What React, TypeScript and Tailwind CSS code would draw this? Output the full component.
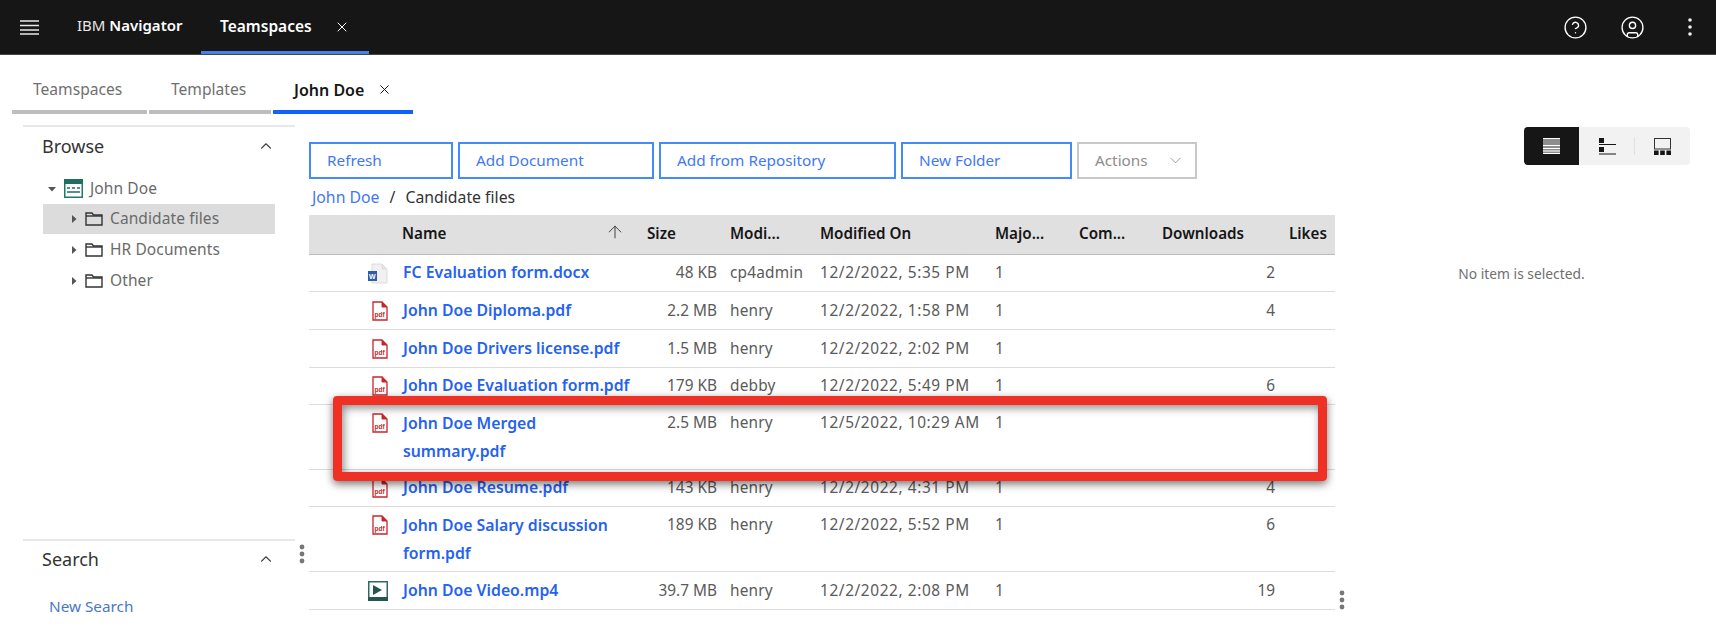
import { ArrowUp, ChevronDown, ChevronUp, CircleHelp, CircleUser, X } from "lucide-react";

const files = [
  { icon: "word", name: "FC Evaluation form.docx", size: "48 KB", by: "cp4admin", date: "12/2/2022, 5:35 PM", likes: "2", h: "h-[37px]" },
  { icon: "pdf", name: "John Doe Diploma.pdf", size: "2.2 MB", by: "henry", date: "12/2/2022, 1:58 PM", likes: "4", h: "h-[38px]" },
  { icon: "pdf", name: "John Doe Drivers license.pdf", size: "1.5 MB", by: "henry", date: "12/2/2022, 2:02 PM", likes: "", h: "h-[38px]" },
  { icon: "pdf", name: "John Doe Evaluation form.pdf", size: "179 KB", by: "debby", date: "12/2/2022, 5:49 PM", likes: "6", h: "h-[37px]" },
  { icon: "pdf", name: "John Doe Merged\nsummary.pdf", size: "2.5 MB", by: "henry", date: "12/5/2022, 10:29 AM", likes: "", h: "h-[65px]" },
  { icon: "pdf", name: "John Doe Resume.pdf", size: "143 KB", by: "henry", date: "12/2/2022, 4:31 PM", likes: "4", h: "h-[37px]" },
  { icon: "pdf", name: "John Doe Salary discussion\nform.pdf", size: "189 KB", by: "henry", date: "12/2/2022, 5:52 PM", likes: "6", h: "h-[65px]" },
  { icon: "video", name: "John Doe Video.mp4", size: "39.7 MB", by: "henry", date: "12/2/2022, 2:08 PM", likes: "19", h: "h-[38px]" },
];

const gridCols = "grid grid-cols-[94px_228px_86px_13px_90px_175px_84px_83px_113px_60px]";

function PdfIcon() {
  return (
    <svg width="16" height="20" viewBox="0 0 16 20" className="block">
      <path d="M1 1h9l5 5v13H1z" fill="#fff" stroke="#c8262c" strokeWidth="1.3" />
      <path d="M10 1v5h5" fill="#c8262c" stroke="#c8262c" strokeWidth="1" />
      <text x="2.5" y="15.5" fontSize="6.5" fontWeight="700" fill="#c8262c" fontFamily="Liberation Sans, sans-serif">pdf</text>
    </svg>
  );
}

function WordIcon() {
  return (
    <svg width="20" height="21" viewBox="0 0 20 21" className="block">
      <path d="M4 1h10l5 5v14H4z" fill="#f1f1f1" stroke="#dcdcdc" />
      <path d="M14 1v5h5" fill="#e4e4e4" stroke="#dcdcdc" />
      <rect x="0" y="8" width="9" height="10" fill="#2f5ea8" />
      <text x="1" y="15.5" fontSize="7" fontWeight="700" fill="#fff" fontFamily="Liberation Sans, sans-serif">W</text>
    </svg>
  );
}

function VideoIcon() {
  return (
    <svg width="20" height="20" viewBox="0 0 20 20" className="block">
      <rect x="0.75" y="0.75" width="18.5" height="18.5" fill="#fff" stroke="#2d6a62" strokeWidth="1.5" />
      <rect x="0" y="16" width="20" height="4" fill="#24584f" />
      <path d="M5 4l9 5-9 5z" fill="#24584f" />
    </svg>
  );
}

function FolderIcon() {
  return (
    <svg width="18" height="14" viewBox="0 0 18 14" className="block">
      <path d="M1 13V1h6l1.5 2H17v10z" fill="none" stroke="#333" strokeWidth="1.4" />
      <path d="M1 4h16" stroke="#333" strokeWidth="1.4" />
    </svg>
  );
}

function TeamspaceIcon() {
  return (
    <svg width="19" height="19" viewBox="0 0 19 19" className="block">
      <rect x="0.75" y="0.75" width="17.5" height="17.5" fill="#fff" stroke="#1f7a6d" strokeWidth="1.5" />
      <rect x="0" y="0" width="19" height="5" fill="#1f6f63" />
      <path d="M3 9h3M8 9h3M13 9h3M3 13h13" stroke="#1f6f63" strokeWidth="1.6" />
    </svg>
  );
}

function Caret({ down }: { down?: boolean }) {
  return (
    <svg width="8" height="8" viewBox="0 0 8 8" className="block">
      {down ? <path d="M0 2h8L4 6.5z" fill="#555" /> : <path d="M2 0l4.5 4L2 8z" fill="#555" />}
    </svg>
  );
}

function Kebab({ color, r = 2.4 }: { color: string; r?: number }) {
  return (
    <svg width="6" height="20" viewBox="0 0 6 20" className="block">
      <circle cx="3" cy="3" r={r} fill={color} />
      <circle cx="3" cy="10" r={r} fill={color} />
      <circle cx="3" cy="17" r={r} fill={color} />
    </svg>
  );
}

function ToolButton({ label, width }: { label: string; width: string }) {
  return (
    <button className={`${width} h-[37px] border-2 border-[#4589ff] text-left pl-[16px] text-[15.3px] text-[#3f78f5]`}>
      {label}
    </button>
  );
}

function FileRow({ file }: { file: (typeof files)[number] }) {
  const tall = file.name.includes("\n");
  const leading = tall ? "leading-[28px]" : "";
  return (
    <div className={`${gridCols} ${file.h} border-b border-[#dcdcdc] text-[15.4px] text-[#5a5a5a] ${tall ? "pt-[4px]" : "items-center"}`}>
      <div className={`flex justify-end pr-[15px] ${tall ? "pt-[4px]" : ""}`}>
        {file.icon === "pdf" && <PdfIcon />}
        {file.icon === "word" && <WordIcon />}
        {file.icon === "video" && <VideoIcon />}
      </div>
      <div className={`whitespace-pre-line text-[15.8px] font-semibold text-[#2562f0] ${leading}`}>{file.name}</div>
      <div className={`text-right ${leading}`}>{file.size}</div>
      <div />
      <div className={`tracking-[0.2px] ${leading}`}>{file.by}</div>
      <div className={`tracking-[0.6px] ${leading}`}>{file.date}</div>
      <div className={leading}>1</div>
      <div />
      <div className={`text-right ${leading}`}>{file.likes}</div>
      <div />
    </div>
  );
}

export default function App() {
  return (
    <div className="relative h-screen overflow-hidden bg-white font-['Noto_Sans',sans-serif]">
      {/* Top bar */}
      <header className="flex h-[55px] items-stretch bg-[#161616] border-b border-[#444] text-white">
        <div className="flex w-[77px] items-center pl-[20px]">
          <svg width="19" height="15" viewBox="0 0 19 15">
            <path d="M0 1h19M0 5.5h19M0 10h19M0 14h19" stroke="#e8e8e8" strokeWidth="1.5" />
          </svg>
        </div>
        <div className="flex w-[124px] items-center pb-[4px] text-[15px] text-[#e8e8e8]">
          IBM&nbsp;<span className="font-semibold text-white">Navigator</span>
        </div>
        <div className="flex w-[168px] items-center border-b-[3px] border-[#4a7fe8] pl-[19px] pt-[3px] text-[15.5px] font-semibold">
          Teamspaces
          <X size={16} strokeWidth={1.5} className="ml-[22px]" />
        </div>
        <div className="ml-auto flex items-center gap-[32px] pr-[14px]">
          <CircleHelp size={25} strokeWidth={1.3} />
          <CircleUser size={25} strokeWidth={1.3} />
          <div className="flex w-[25px] justify-center">
            <Kebab color="#eee" r={1.8} />
          </div>
        </div>
      </header>

      {/* Tabs */}
      <div className="flex h-[59px] gap-[2px] pl-[12px] text-[15.6px]">
        <div className="flex w-[135px] items-center border-b-4 border-[#bdbdbd] pl-[21px] pt-[14px] text-[#6f6f6f]">Teamspaces</div>
        <div className="flex w-[122px] items-center border-b-4 border-[#bdbdbd] pl-[22px] pt-[14px] text-[#6f6f6f]">Templates</div>
        <div className="flex w-[140px] items-center border-b-4 border-[#0f62fe] pl-[21px] pt-[14px] text-[16px] font-semibold text-[#161616]">
          John Doe
          <X size={15} strokeWidth={1.6} className="ml-[13px]" />
        </div>
      </div>

      <div className="flex h-[515px]">
        {/* Sidebar */}
        <aside className="ml-[23px] mt-[11px] flex w-[272px] flex-col">
          <div className="flex h-[48px] items-center justify-between border-t-2 border-[#e8e8e8] pb-[8px] pl-[19px] pr-[20px] text-[18px] text-[#333]">
            Browse
            <ChevronUp size={18} strokeWidth={1.5} className="text-[#444]" />
          </div>
          <div className="ml-[20px] w-[232px] text-[15.5px] tracking-[0.1px] text-[#6a6a6a]">
            <div className="flex h-[31px] items-center gap-[9px] pl-[5px]">
              <Caret down />
              <div className="-ml-[1px]"><TeamspaceIcon /></div>
              <span className="-ml-[2px]">John Doe</span>
            </div>
            <div className="flex h-[30px] items-center bg-[#dcdcdc] pl-[27px]">
              <Caret />
              <span className="ml-[7px]"><FolderIcon /></span>
              <span className="ml-[7px]">Candidate files</span>
            </div>
            <div className="flex h-[31px] items-center pl-[27px]">
              <Caret />
              <span className="ml-[7px]"><FolderIcon /></span>
              <span className="ml-[7px]">HR Documents</span>
            </div>
            <div className="flex h-[31px] items-center pl-[27px]">
              <Caret />
              <span className="ml-[7px]"><FolderIcon /></span>
              <span className="ml-[7px]">Other</span>
            </div>
          </div>
          <div className="mt-auto h-[90px] border-t-2 border-[#e8e8e8]">
            <div className="flex h-[36px] items-center justify-between pl-[19px] pr-[20px] text-[18px] text-[#333]">
              Search
              <ChevronUp size={18} strokeWidth={1.5} className="text-[#444]" />
            </div>
            <div className="pl-[26px] pt-[18px] text-[15.3px] text-[#4a78c4]">New Search</div>
          </div>
        </aside>

        {/* File list */}
        <main className="ml-[14px] w-[1026px] pt-[28px]">
          <div className="flex gap-[5px]">
            <ToolButton label="Refresh" width="w-[144px]" />
            <ToolButton label="Add Document" width="w-[196px]" />
            <ToolButton label="Add from Repository" width="w-[237px]" />
            <ToolButton label="New Folder" width="w-[171px]" />
            <button className="flex h-[37px] w-[120px] items-center justify-between border-2 border-[#c8c8c8] pl-[16px] pr-[10px] text-[15.3px] text-[#8d8d8d]">
              Actions
              <ChevronDown size={19} strokeWidth={1.1} />
            </button>
          </div>
          <div className="flex h-[36px] items-center pl-[3px] pt-[2px] text-[15.8px] text-[#333]">
            <span className="text-[#3f78f5]">John Doe</span>
            <span className="mx-[10px]">/</span>
            Candidate files
          </div>
          <div className={`${gridCols} h-[40px] items-center border-b border-[#bdbdbd] bg-[#e0e0e0] pb-[2px] text-[15.2px] font-semibold text-[#161616]`}>
            <div />
            <div className="relative -ml-[1px]">
              Name
              <ArrowUp size={20} strokeWidth={1.1} className="absolute left-[203px] top-[0px] text-[#333]" />
            </div>
            <div className="col-span-2 pl-[16px]">Size</div>
            <div>Modi...</div>
            <div>Modified On</div>
            <div>Majo...</div>
            <div>Com...</div>
            <div>Downloads</div>
            <div className="ml-[14px]">Likes</div>
          </div>
          {files.map((file) => (
            <FileRow key={file.name} file={file} />
          ))}
        </main>

        {/* Details */}
        <section className="flex-1 pt-[13px]">
          <div className="ml-[189px] flex h-[38px] w-[166px] overflow-hidden rounded-[4px] bg-[#f2f2f2]">
            <div className="flex w-[55px] items-center justify-center bg-[#161616]">
              <svg width="17" height="16" viewBox="0 0 17 16">
                <rect width="17" height="16" fill="#8d8d8d" />
                <path d="M0 .5h17M0 7.5h17M0 10.5h17M0 13h17M0 15.5h17" stroke="#fff" strokeWidth="1" />
              </svg>
            </div>
            <div className="flex w-[55px] items-center justify-center pl-[2px]">
              <svg width="17" height="17" viewBox="0 0 17 17">
                <rect width="5" height="5" fill="#161616" />
                <rect y="9" width="5" height="5" fill="#161616" />
                <path d="M0 6.5h17M0 16h17" stroke="#161616" strokeWidth="1" />
              </svg>
            </div>
            <div className="my-[10px] w-px bg-[#e0e0e0]" />
            <div className="flex flex-1 items-center justify-center">
              <svg width="17" height="17" viewBox="0 0 17 17">
                <rect x="0.5" y="0.5" width="16" height="10.5" fill="none" stroke="#333" />
                <rect y="12.5" width="4.6" height="4.5" fill="#161616" />
                <rect x="6.2" y="12.5" width="4.6" height="4.5" fill="#161616" />
                <rect x="12.4" y="12.5" width="4.6" height="4.5" fill="#161616" />
              </svg>
            </div>
          </div>
          <div className="mt-[99px] pr-[8px] text-center text-[13.8px] text-[#6f6f6f]">No item is selected.</div>
        </section>
      </div>

      {/* Sash handles */}
      <div className="absolute left-[299px] top-[544px]"><Kebab color="#777" /></div>
      <div className="absolute left-[1339px] top-[590px]"><Kebab color="#777" /></div>

      {/* Red callout */}
      <div className="absolute left-[333px] top-[396px] h-[85px] w-[994px] rounded-[4px] border-[9px] border-[#ee3124] shadow-[0_3px_8px_rgba(0,0,0,0.55),inset_2px_3px_8px_rgba(0,0,0,0.45)]" />
    </div>
  );
}
